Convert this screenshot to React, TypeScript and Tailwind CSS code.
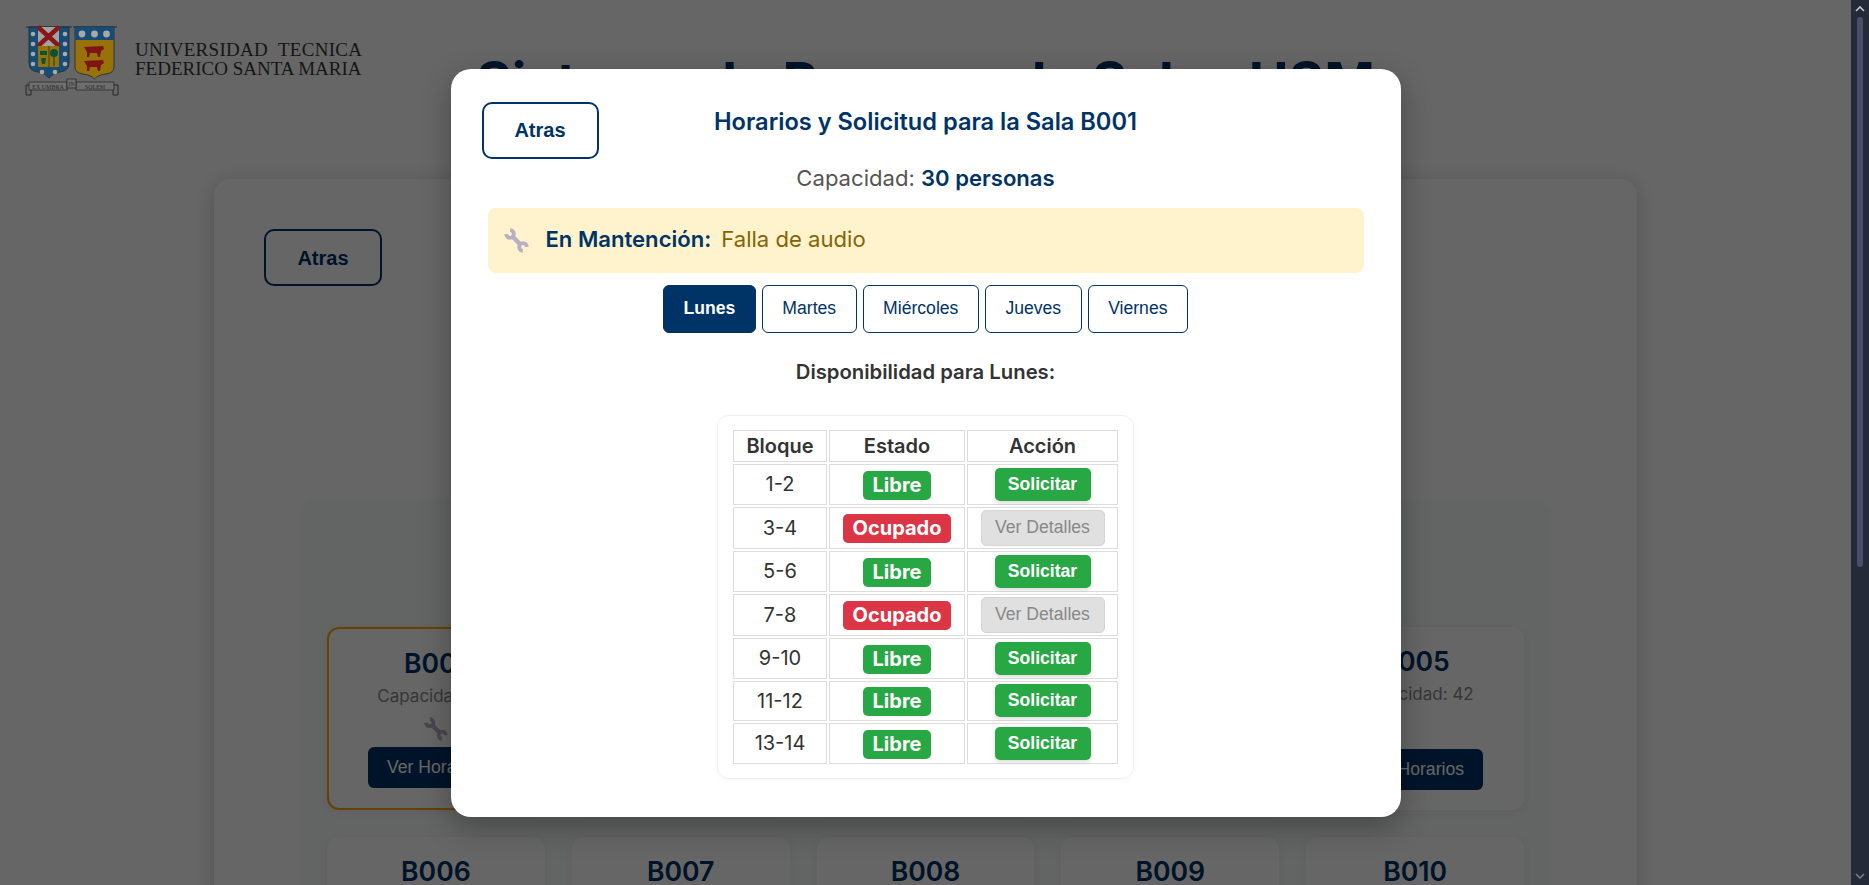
const salas = [
  { id: "B001", cap: 30, mant: true },
  { id: "B002", cap: 35 },
  { id: "B003", cap: 40 },
  { id: "B004", cap: 25 },
  { id: "B005", cap: 42 },
  { id: "B006", cap: 30 },
  { id: "B007", cap: 36 },
  { id: "B008", cap: 28 },
  { id: "B009", cap: 45 },
  { id: "B010", cap: 32 },
]

const bloques = [
  { nombre: "1-2", libre: true, h: "h-[41px]" },
  { nombre: "3-4", libre: false, h: "h-[42px]" },
  { nombre: "5-6", libre: true, h: "h-[41px]" },
  { nombre: "7-8", libre: false, h: "h-[42px]" },
  { nombre: "9-10", libre: true, h: "h-[41px]" },
  { nombre: "11-12", libre: true, h: "h-[40px]" },
  { nombre: "13-14", libre: true, h: "h-[41px]" },
]

const dias = ["Lunes", "Martes", "Miércoles", "Jueves", "Viernes"]

function WrenchIcon({ className }: { className: string }) {
  return (
    <svg viewBox="0 0 24 24" fill="none" stroke="#b8aec6" className={className}>
      <path d="M8 8 L16 16" strokeWidth="4" />
      <path d="M6.4 2.8 A3.4 3.4 0 1 1 2.8 6.4" strokeWidth="3.4" />
      <path d="M17.6 21.2 A3.4 3.4 0 1 1 21.2 17.6" strokeWidth="3.4" />
    </svg>
  )
}

function Bull({ y }: { y: number }) {
  return (
    <g transform={`translate(0 ${y})`} fill="#7e1414">
      <path d="M84 46 L103 45 L104 48 L101 50 L100 56 L98 56 L97 52 L90 52 L89 56 L87 56 L87 51 Z" />
    </g>
  )
}

function Logo() {
  const dots = [
    [33, 33], [33, 43], [33, 53], [33, 63], [65, 33], [65, 43], [65, 53], [65, 63], [42, 71], [55, 71],
  ]
  return (
    <svg viewBox="25 24 95 72" className="h-[72px] w-[95px] shrink-0">
      <path d="M26 26 H72 M73 26 H117" stroke="#1a2a35" strokeWidth="1.2" />
      <path d="M29 26 H69 V62 Q69 70 60 71 Q53 72 49 77 Q45 72 38 71 Q29 70 29 62 Z" fill="#174c74" stroke="#1c2a33" strokeWidth="0.8" />
      <rect x="38" y="26" width="21" height="19" fill="#a3a3a3" />
      <path d="M38 26 L59 45 M59 26 L38 45" stroke="#8a1616" strokeWidth="4.5" />
      <rect x="38" y="45" width="21" height="21" fill="#97720a" />
      <path d="M49 45 V66" stroke="#222" strokeWidth="0.7" />
      <path d="M40 50 H47 V54 H40 Z M41 57 H46 L45 63 H42 Z" fill="#0b5233" />
      <circle cx="54" cy="52" r="4" fill="#0b5233" />
      <path d="M54 55 V65" stroke="#0b5233" strokeWidth="1.2" />
      {dots.map(([cx, cy]) => (
        <circle key={`${cx}-${cy}`} cx={cx} cy={cy} r="2.3" fill="#a8a8a8" />
      ))}
      <path d="M75 26 H114 V66 Q114 72 106 73 Q98 74 94.5 78 Q91 74 83 73 Q75 72 75 66 Z" fill="#97720a" stroke="#1c2a33" strokeWidth="0.8" />
      <path d="M75 26 H114 V39 H75 Z" fill="#174c74" />
      <circle cx="82" cy="33" r="3.4" fill="#a8a8a8" />
      <circle cx="94.5" cy="33" r="3.4" fill="#a8a8a8" />
      <circle cx="106.5" cy="33" r="3.4" fill="#a8a8a8" />
      <Bull y={0} />
      <Bull y={14} />
      <path d="M29 81 H67 V89 H29 Z M76 81 H114 V89 H76 Z" fill="#6e6e6e" stroke="#222" strokeWidth="0.7" />
      <path d="M29 84 H26 V94 H31 V89 M114 84 H118 V94 H113 V89" fill="none" stroke="#222" strokeWidth="0.9" />
      <rect x="67" y="78" width="9" height="9" fill="#6e6e6e" stroke="#222" strokeWidth="0.7" />
      <text x="48" y="88" textAnchor="middle" fontSize="6" fontFamily="Liberation Serif" fill="#2a2a2a">EX UMBRA</text>
      <text x="71.5" y="85" textAnchor="middle" fontSize="5.5" fontFamily="Liberation Serif" fill="#2a2a2a">IN</text>
      <text x="95" y="88" textAnchor="middle" fontSize="6" fontFamily="Liberation Serif" fill="#2a2a2a">SOLEM</text>
    </svg>
  )
}

function SalaCard({ id, cap, mant }: { id: string; cap: number; mant?: boolean }) {
  return (
    <div
      className={`flex h-[183px] flex-col items-center rounded-xl bg-white px-4 pb-[20px] pt-[18px] shadow-[0_2px_8px_rgba(0,0,0,0.05)] ${
        mant ? "border-2 border-[#ffa500]" : ""
      }`}
    >
      <h3 className="text-[26.6px] font-semibold leading-[32px] text-[#003366]">{id}</h3>
      <p className="mt-[5px] text-[17px] leading-[24px] text-[#888888]">Capacidad: {cap}</p>
      {mant && <WrenchIcon className="mt-[8px] h-[26px] w-[26px]" />}
      <button className="mt-auto h-[41px] rounded-md bg-[#003366] px-[19px] font-['Liberation_Sans',sans-serif] text-[17.6px] text-white">
        Ver Horarios
      </button>
    </div>
  )
}

function Modal() {
  return (
    <div className="relative w-[950px] rounded-[20px] bg-white px-[37px] pb-[38px] pt-[38px] shadow-[0_10px_30px_rgba(0,0,0,0.3)]">
      <button className="absolute left-[31px] top-[33px] h-[57px] w-[117px] rounded-[10px] border-2 border-[#003366] font-['Liberation_Sans',sans-serif] text-[20px] font-bold text-[#003366]">
        Atras
      </button>
      <h2 className="text-center text-[23.6px] font-semibold leading-[30px] text-[#003366]">
        Horarios y Solicitud para la Sala B001
      </h2>
      <p className="mt-[27px] text-center text-[22.08px] leading-[28px] text-[#555555]">
        Capacidad: <strong className="font-semibold text-[#003366]">30 personas</strong>
      </p>
      <div className="mt-[16px] flex h-[65px] items-center rounded-lg bg-[#fff3cd] pl-[15px]">
        <WrenchIcon className="h-[27px] w-[27px]" />
        <strong className="ml-[16px] text-[22.08px] font-semibold text-[#003366]">En Mantención:</strong>
        <span className="ml-[10px] text-[22.08px] text-[#856404]">Falla de audio</span>
      </div>
      <div className="mt-[12px] flex justify-center gap-[6px]">
        {dias.map((dia, i) => (
          <button
            key={dia}
            className={`h-[48px] rounded-md border border-[#003366] px-[19.5px] font-['Liberation_Sans',sans-serif] text-[17.6px] ${
              i === 0 ? "bg-[#003366] font-bold text-white" : "bg-white text-[#003366]"
            }`}
          >
            {dia}
          </button>
        ))}
      </div>
      <h4 className="mt-[26px] text-center text-[20.3px] font-semibold leading-[26px] text-[#333333]">
        Disponibilidad para Lunes:
      </h4>
      <div className="mx-auto mt-[30px] w-[417px] rounded-xl border border-[#f0f0f0] px-[13px] py-[12px] shadow-[0_2px_6px_rgba(0,0,0,0.03)]">
        <table className="w-full table-fixed border-separate border-spacing-[2px] text-center text-[20px] text-[#333333]">
          <thead>
            <tr className="h-[31px]">
              <th className="w-[94px] border border-[#dddddd] p-0 font-semibold">Bloque</th>
              <th className="w-[136px] border border-[#dddddd] p-0 font-semibold">Estado</th>
              <th className="border border-[#dddddd] p-0 font-semibold">Acción</th>
            </tr>
          </thead>
          <tbody>
            {bloques.map((b) => (
              <tr key={b.nombre} className={b.h}>
                <td className="border border-[#dddddd] p-0">{b.nombre}</td>
                <td className="border border-[#dddddd] p-0">
                  <span
                    className={`inline-block h-[29px] rounded-[5px] px-[10px] align-middle font-bold leading-[29px] text-white ${
                      b.libre ? "bg-[#28a745]" : "bg-[#dc3545]"
                    }`}
                  >
                    {b.libre ? "Libre" : "Ocupado"}
                  </span>
                </td>
                <td className="border border-[#dddddd] p-0">
                  {b.libre ? (
                    <button className="h-[33px] w-[96px] rounded-[5px] bg-[#28a745] align-middle font-['Liberation_Sans',sans-serif] text-[17.6px] font-bold text-white shadow-[0_2px_4px_rgba(0,0,0,0.15)]">
                      Solicitar
                    </button>
                  ) : (
                    <button className="h-[36px] w-[124px] rounded-[5px] border border-[#d4d4d4] bg-[#e0e0e0] align-middle font-['Liberation_Sans',sans-serif] text-[17.6px] text-[#888888]">
                      Ver Detalles
                    </button>
                  )}
                </td>
              </tr>
            ))}
          </tbody>
        </table>
      </div>
    </div>
  )
}

export default function App() {
  return (
    <div className="flex h-screen overflow-hidden bg-white font-['Inter',sans-serif]">
      <main className="relative h-screen min-w-0 flex-1 overflow-hidden">
        <header className="grid h-[179px] grid-cols-[1fr_auto_1fr]">
          <div className="relative z-20 flex items-start gap-[15px] pl-[25px] pt-[25px]">
            <Logo />
            <div className="mt-[16px] whitespace-pre font-['Liberation_Serif',serif] text-[19px] leading-[18.5px] text-[#151515]">
              <div className="tracking-[0.3px]">UNIVERSIDAD  TECNICA</div>
              <div>FEDERICO SANTA MARIA</div>
            </div>
          </div>
          <h1 className="pt-[49px] text-[54.4px] font-bold leading-[66px] text-[#003366]">
            Sistema de Reserva de Salas USM
          </h1>
          <div />
        </header>

        <section className="mx-auto w-[1423px] rounded-2xl bg-white p-[50px] shadow-[0_4px_20px_rgba(0,0,0,0.2)]">
          <button className="h-[57px] w-[118px] rounded-[10px] border-2 border-[#003366] font-['Liberation_Sans',sans-serif] text-[20px] font-bold text-[#003366]">
            Atras
          </button>
          <div className="mx-[38px] mt-[214px] rounded-xl bg-[#f8f9fa] px-[25px] pb-[26px] pt-[127px] shadow-[0_2px_8px_rgba(0,0,0,0.03)]">
            <div className="grid grid-cols-5 gap-[27px]">
              {salas.map((s) => (
                <SalaCard key={s.id} id={s.id} cap={s.cap} mant={s.mant} />
              ))}
            </div>
          </div>
        </section>

        <div className="absolute inset-0 z-10 flex items-center justify-center bg-black/60">
          <Modal />
        </div>
      </main>

      <aside className="relative z-20 flex h-screen w-[18px] shrink-0 flex-col items-center bg-[#252a38]">
        <svg viewBox="0 0 10 6" className="mt-[6px] h-[6px] w-[10px]" fill="none" stroke="#c8c8d0" strokeWidth="1.6">
          <path d="M1 5 L5 1 L9 5" />
        </svg>
        <div className="mt-[5px] h-[550px] w-[6px] rounded-full bg-[#4a4e69]" />
        <svg viewBox="0 0 10 6" className="mb-[6px] mt-auto h-[6px] w-[10px]" fill="none" stroke="#7a7a88" strokeWidth="1.6">
          <path d="M1 1 L5 5 L9 1" />
        </svg>
      </aside>
    </div>
  )
}
